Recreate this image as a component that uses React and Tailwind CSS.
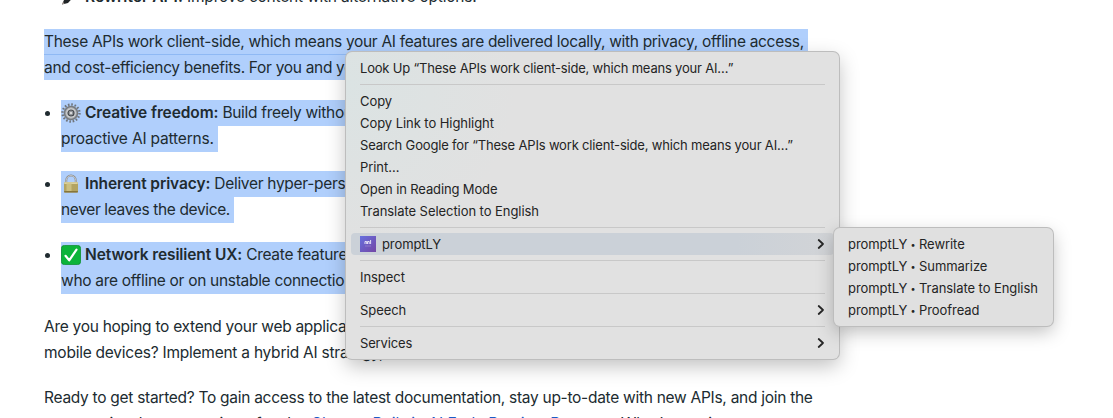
import React from "react";

const line = "block w-max whitespace-pre";
const sel = "bg-[#b0cffc]";

function Gear() {
  return (
    <svg viewBox="0 0 20 20" className="mr-1 h-5 w-5 shrink-0">
      <circle cx="10" cy="10" r="8.5" fill="none" stroke="#70757b" strokeWidth="2.4" strokeDasharray="1.6 1.737" />
      <circle cx="10" cy="10" r="6.5" fill="#b4b6b9" stroke="#777b80" strokeWidth="1.6" />
      <circle cx="10" cy="10" r="4.6" fill="#d3d5d7" />
      <circle cx="10" cy="10" r="3" fill="#94979b" stroke="#45484c" strokeWidth="1.2" />
      <circle cx="10" cy="10" r="1.1" fill="#e8e8e8" />
    </svg>
  );
}

function Lock() {
  return (
    <svg viewBox="0 0 20 20" className="mr-1 h-5 w-5 shrink-0">
      <path d="M5.2 10V6.4a4.8 4.8 0 0 1 9.6 0V10" fill="none" stroke="#85888b" strokeWidth="2" />
      <path d="M5.2 10V6.4a4.8 4.8 0 0 1 9.6 0V10" fill="none" stroke="#d5d7d8" strokeWidth="0.8" />
      <rect x="3" y="8.3" width="14" height="10.2" rx="1" fill="#b3a462" />
      <rect x="3" y="8.3" width="14" height="1.6" rx="0.8" fill="#ddd39f" />
      <rect x="5.5" y="9.5" width="5" height="8.5" fill="#cbbf82" />
      <rect x="3" y="17" width="14" height="1.5" rx="0.7" fill="#85753b" />
    </svg>
  );
}

function Check() {
  return (
    <svg viewBox="0 0 20 20" className="mr-1 h-5 w-5 shrink-0">
      <rect x="0.4" y="0.4" width="19.2" height="19.2" rx="3" fill="#0cb43a" stroke="#078b29" strokeWidth="0.8" />
      <path d="M4.5 10.8 8.2 15.3 15.5 4.7" fill="none" stroke="#fff" strokeWidth="2.2" strokeLinecap="round" strokeLinejoin="round" />
    </svg>
  );
}

function Item({ icon, title, rest, second, secondClass }) {
  return (
    <li className="mb-[19px] flex">
      <span className="mt-[11px] mr-[11px] ml-px h-[5px] w-[5px] shrink-0 rounded-full bg-[#202b30]" />
      <div>
        <div className={`flex h-[26px] w-max items-center ${sel}`}>
          {icon}
          <b className="font-semibold tracking-[-0.1px] whitespace-pre">{title}</b>
          <span className="tracking-[-0.3px] whitespace-pre">{rest}</span>
        </div>
        <div className={`h-[26px] w-max pr-[4px] leading-[26px] whitespace-pre ${sel} ${secondClass}`}>{second}</div>
      </div>
    </li>
  );
}

function Chevron() {
  return (
    <svg viewBox="0 0 8 12" className="h-3 w-2">
      <path d="M1.7 2 6 6 1.7 10" fill="none" stroke="#262626" strokeWidth="1.8" strokeLinecap="round" strokeLinejoin="round" />
    </svg>
  );
}

function Row({ children, arrow, className = "tracking-[-0.06px]" }) {
  return (
    <div className={`flex h-[22px] items-center justify-between px-[14px] whitespace-pre ${className}`}>
      <span className="pt-[2px]">{children}</span>
      {arrow && <Chevron />}
    </div>
  );
}

function SubRow({ children }) {
  return (
    <div className="flex h-[22px] items-center px-[14px] pt-[2px] whitespace-pre">
      <span className="w-[59px] shrink-0 tracking-[-0.06px]">promptLY</span>
      <span className="w-[12px] shrink-0 text-center text-[9px] leading-[14px]">•</span>
      <span className="tracking-[-0.06px]">{children}</span>
    </div>
  );
}

function Rule() {
  return <div className="mx-[14px] my-[5px] h-px bg-[#c8c8c8]" />;
}

export default function App() {
  return (
    <main className="relative h-[418px] w-[1113px] overflow-hidden bg-white font-['Inter','Liberation_Sans',sans-serif] text-[#202b30]">
      <article className="-mt-[16px] pl-[44px] text-[15.5px] leading-[25.5px]">
        <div className="mb-[19px] flex h-[26px] items-center">
          <svg viewBox="0 0 20 20" className="mr-[5px] ml-[16px] h-5 w-5">
            <path d="M2 17.5 4 13 15 2 18 5 8 16Z" fill="#202426" />
            <path d="M2 17.5 3 15 4.5 16.5Z" fill="#b3a49b" />
          </svg>
          <b className="font-semibold tracking-[0.05px]">Rewriter API:</b>
          <span className="tracking-[-0.22px] whitespace-pre"> Improve content with alternative options.</span>
        </div>
        <p className="mb-[20px] h-[51px] tracking-[-0.31px]">
          <span className={`${line} ${sel} h-[25px] pr-[4px] leading-[26px]`}>These APIs work client-side, which means your AI features are delivered locally, with privacy, offline access,</span>
          <span className={`${line} ${sel} h-[26px] border-t border-[#8fb9f4] leading-[25px]`}>and cost-efficiency benefits. For you and your</span>
        </p>
        <ul>
          <Item icon={<Gear />} title="Creative freedom:" rest=" Build freely without" second="proactive AI patterns." secondClass="tracking-[-0.18px]" />
          <Item icon={<Lock />} title="Inherent privacy:" rest=" Deliver hyper-person" second="never leaves the device." secondClass="tracking-[-0.36px]" />
          <Item icon={<Check />} title="Network resilient UX:" rest=" Create features" second="who are offline or on unstable connections" secondClass="tracking-[-0.3px]" />
        </ul>
        <p className="mt-[20px] mb-[20px] h-[51px]">
          <span className={`${line} tracking-[-0.28px]`}>Are you hoping to extend your web application</span>
          <span className={`${line} tracking-[-0.24px]`}>mobile devices? Implement a hybrid AI strategy,</span>
        </p>
        <p>
          <span className={`${line} tracking-[-0.28px]`}>Ready to get started? To gain access to the latest documentation, stay up-to-date with new APIs, and join the</span>
          <span className={line}><span className="tracking-[0.31px]">community demonstrations for the </span><span className="tracking-[-0.05px] text-[#1a5cc8]">Chrome Built-in AI Early Preview Program</span>. What's coming</span>
        </p>
      </article>

      <div className="absolute top-[52px] left-[346px] h-[307px] w-[493px] rounded-[6px] bg-[#e1e1e1] bg-[radial-gradient(circle_at_0_10%,#dbe3e3_0,#e1e1e1_170px)] pt-[5px] text-[13px] text-[#242424] shadow-[0_0_0_1px_#bdbdbd,0_7px_20px_rgba(0,0,0,0.25)]">
        <Row className="tracking-[-0.19px]">Look Up “These APIs work client-side, which means your AI…”</Row>
        <Rule />
        <Row>Copy</Row>
        <Row>Copy Link to Highlight</Row>
        <Row className="tracking-[-0.17px]">Search Google for “These APIs work client-side, which means your AI…”</Row>
        <Row>Print…</Row>
        <Row className="tracking-[-0.13px]">Open in Reading Mode</Row>
        <Row>Translate Selection to English</Row>
        <Rule />
        <div className="mr-[5px] ml-[5px] flex h-[22px] items-center rounded-[4px] bg-linear-to-r from-[#cbd1d8] from-80% to-[#d2d4d7] px-[9px]">
          <svg viewBox="0 0 16 16" className="mr-[6px] h-4 w-4">
            <defs><linearGradient id="brand" x1="0" y1="0" x2="1" y2="1"><stop stopColor="#6670de" /><stop offset="1" stopColor="#7446a5" /></linearGradient></defs>
            <path fill="url(#brand)" d="M0 0h16v16H0z" />
            <path d="M5 8V5.5h1.7V8M7.5 8V5.5h1.7V8M10.6 4v4" stroke="#e4dff5" fill="none" />
            <path d="M5 10h6" stroke="#9f88cd" strokeWidth=".7" />
          </svg>
          <span className="grow pt-[2px] tracking-[-0.1px]">promptLY</span>
          <Chevron />
        </div>
        <Rule />
        <Row>Inspect</Row>
        <Rule />
        <Row arrow>Speech</Row>
        <Rule />
        <Row arrow className="tracking-[-0.15px]">Services</Row>
      </div>

      <div className="absolute top-[228px] left-[834px] h-[98px] w-[219px] rounded-[6px] bg-[#e0e0e0] pt-[5px] text-[13px] text-[#242424] shadow-[0_0_0_1px_#bdbdbd,0_6px_18px_rgba(0,0,0,0.25)]">
        <SubRow>Rewrite</SubRow>
        <SubRow>Summarize</SubRow>
        <SubRow>Translate to English</SubRow>
        <SubRow>Proofread</SubRow>
      </div>
    </main>
  );
}
